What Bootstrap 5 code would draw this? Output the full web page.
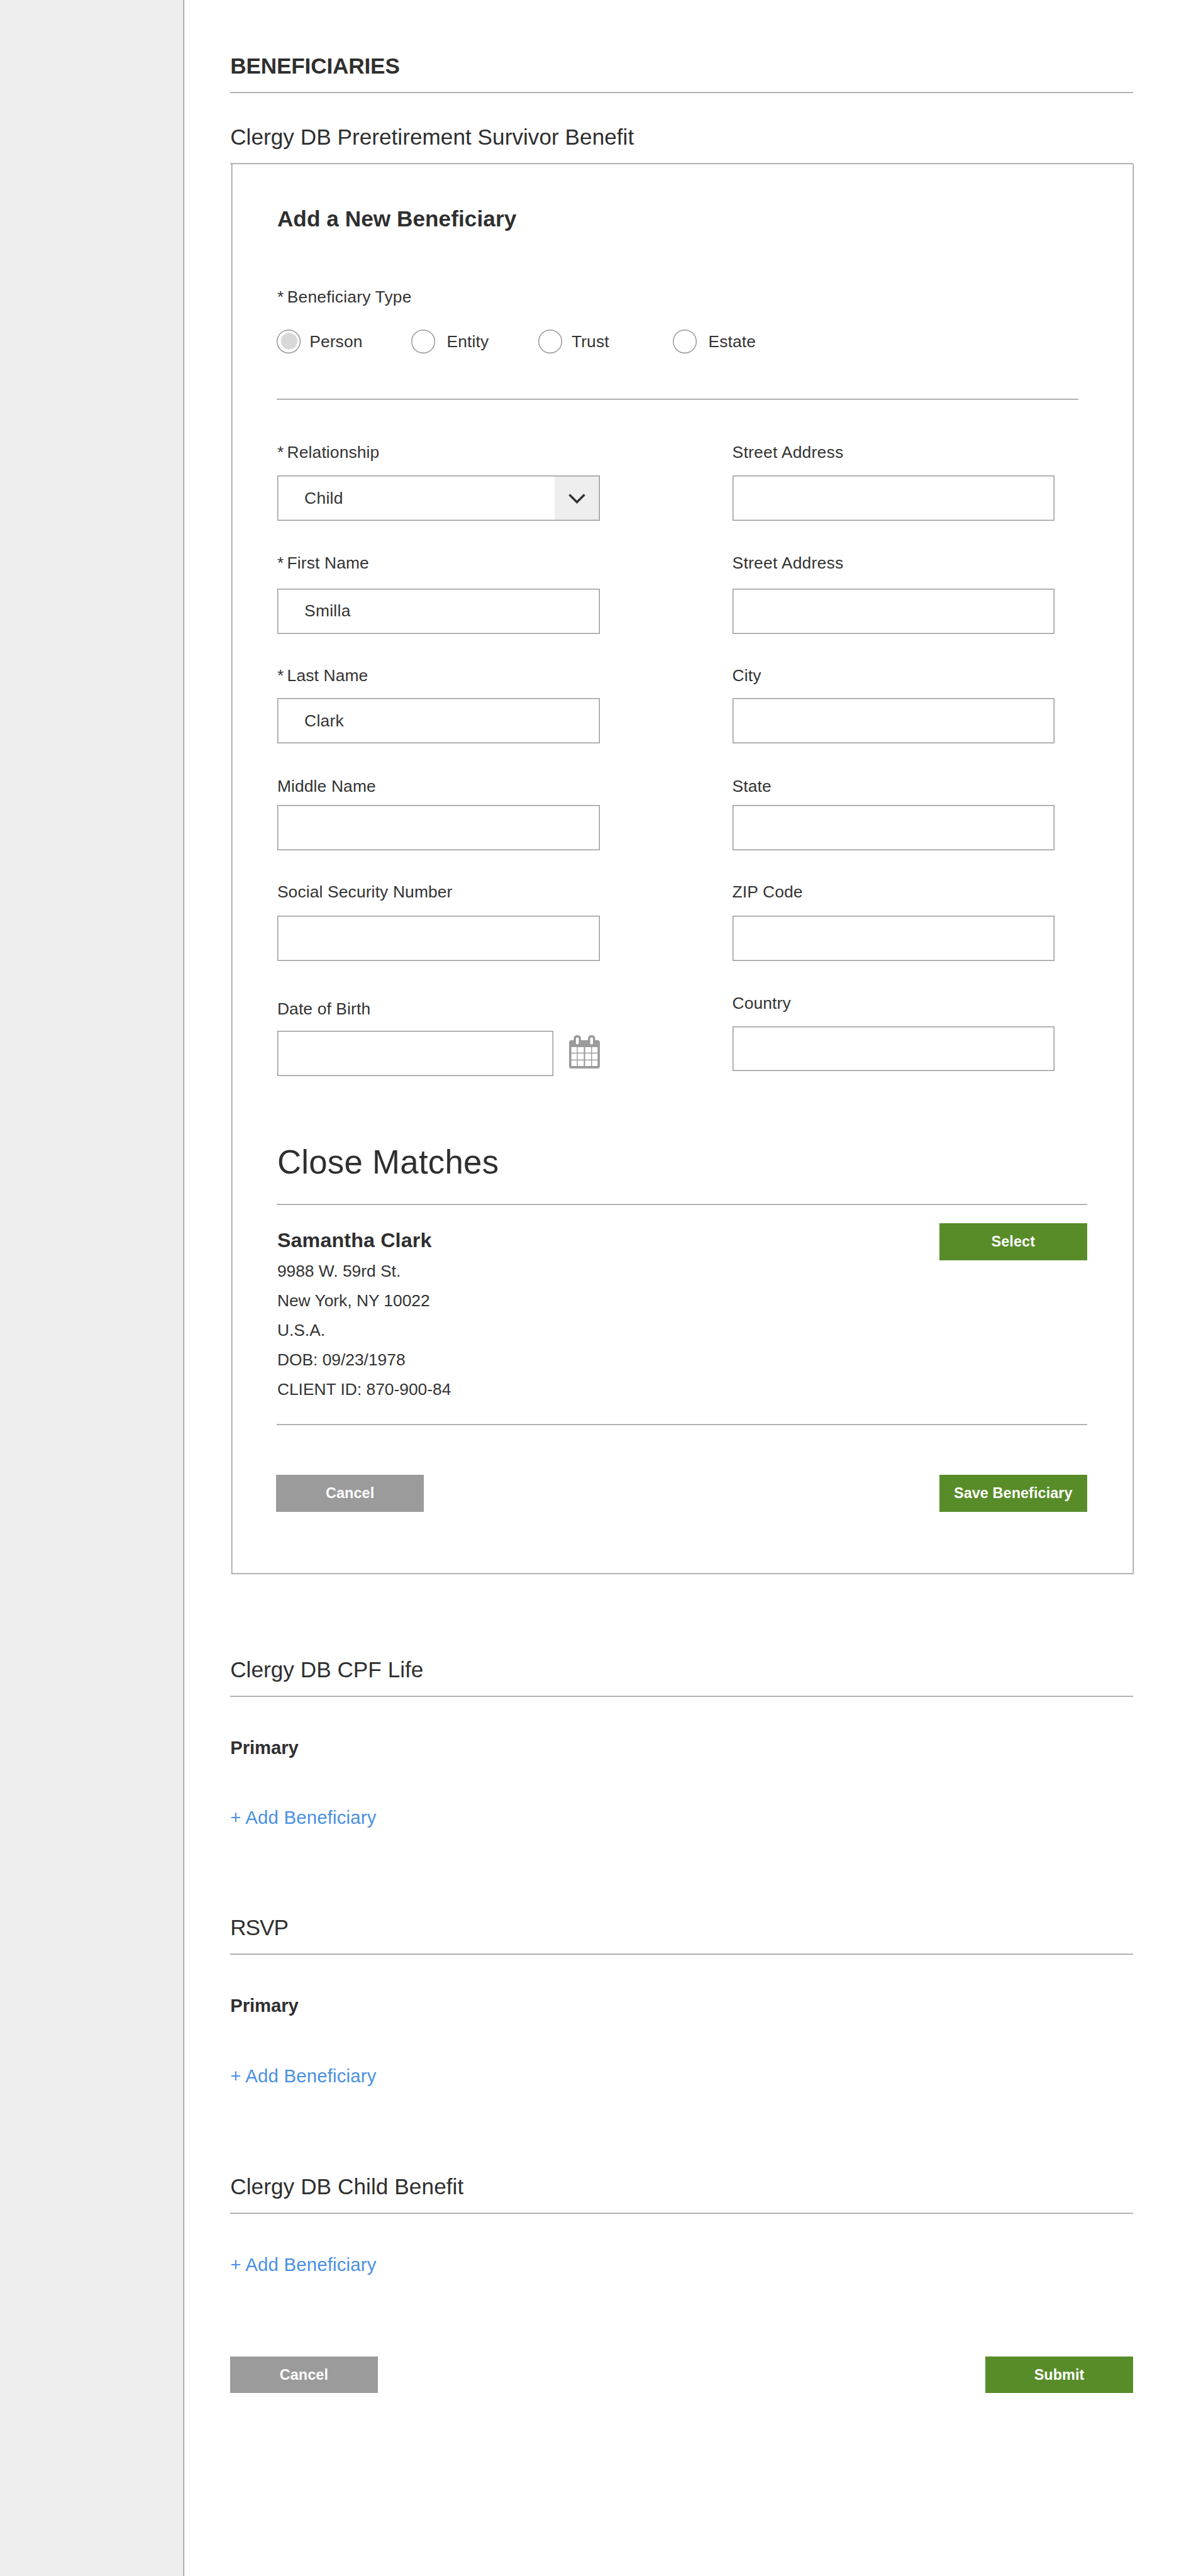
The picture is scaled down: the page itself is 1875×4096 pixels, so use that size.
<!DOCTYPE html>
<html lang="en">
<head>
<meta charset="utf-8">
<meta name="viewport" content="width=device-width, initial-scale=1">
<title>Beneficiaries</title>
<link href="https://cdn.jsdelivr.net/npm/bootstrap@5.3.0/dist/css/bootstrap.min.css" rel="stylesheet">
<style>
:root{--u:.732422px;--ink:#333;--line:#979797;--soft:rgba(151,151,151,.46)}
body{font-family:"Liberation Sans",Arial,sans-serif;color:var(--ink);font-size:calc(36*var(--u));background:#fff}
.page-shell{min-height:4096px}
.side-rail{width:calc(400*var(--u));background:#eee;border-right:1px solid var(--line);box-shadow:inset -1px 0 0 #c6c6c6}
.page-main{margin-left:calc(100*var(--u));width:calc(1960*var(--u));padding-top:calc(113.4*var(--u))}
.sec-head{font-size:calc(48*var(--u));line-height:calc(61*var(--u));height:calc(88.6*var(--u));border-bottom:1px solid var(--line);box-shadow:inset 0 -1px 0 var(--soft);margin:0;color:#2f2f2f;font-weight:400;letter-spacing:calc(.05*var(--u))}
.main-title{letter-spacing:calc(-.2*var(--u))}
.after-title{margin-top:calc(65.4*var(--u))}
.after-panel{margin-top:calc(176.7*var(--u))}
.next-sec{margin-top:calc(185*var(--u));letter-spacing:calc(-1.4*var(--u))}
.last-sec{margin-top:calc(186.3*var(--u));letter-spacing:calc(.12*var(--u))}
.panel-box{margin-left:calc(2*var(--u));width:calc(1960*var(--u));height:calc(3062*var(--u));border:1px solid var(--line);border-top:0;box-shadow:inset 1px 0 0 var(--soft),inset -1px -1px 0 var(--soft);padding:calc(89.4*var(--u)) calc(102*var(--u) - 1px) 0 calc(100*var(--u) - 1px)}
.panel-title{font-size:calc(48*var(--u));line-height:calc(60*var(--u));margin:0;color:#2f2f2f;letter-spacing:calc(.1*var(--u))}
.lbl{display:block;height:calc(40*var(--u));line-height:calc(42*var(--u));margin:0;letter-spacing:calc(.2*var(--u))}
.lbl-wide{letter-spacing:calc(.4*var(--u))}
.req{margin-right:calc(-3*var(--u))}
.type-lbl{margin-top:calc(118.1*var(--u));letter-spacing:calc(.3*var(--u))}
.type-row{margin-top:calc(51.5*var(--u));margin-left:calc(-1*var(--u));height:calc(52*var(--u));line-height:calc(53*var(--u));letter-spacing:calc(.2*var(--u))}
.opt-a{width:calc(292*var(--u));gap:calc(19*var(--u))}
.opt-b{width:calc(276*var(--u));gap:calc(25*var(--u))}
.opt-c{width:calc(292*var(--u));gap:calc(20*var(--u))}
.opt-d{gap:calc(25*var(--u))}
.dot{width:calc(52*var(--u));height:calc(52*var(--u));flex:none}
.type-rule{margin:calc(99*var(--u)) 0 0 calc(-1*var(--u));width:calc(1741*var(--u));border-top:1px solid var(--line);height:calc(2*var(--u));box-shadow:inset 0 1px 0 var(--soft)}
.field-cols{margin-top:calc(93.5*var(--u));gap:calc(288*var(--u));height:calc(1374.5*var(--u))}
.field-col{width:calc(700*var(--u))}
.f2{margin-top:calc(71.5*var(--u))}.f3{margin-top:calc(69.5*var(--u))}.f4{margin-top:calc(72*var(--u))}
.f5{margin-top:calc(69.5*var(--u))}.f6{margin-top:calc(83.5*var(--u))}.f6r{margin-top:calc(71.5*var(--u))}
.f1 .lbl,.f3 .lbl,.f6r .lbl{margin-bottom:calc(30.5*var(--u))}.f2 .lbl{margin-bottom:calc(36.5*var(--u))}
.f4 .lbl{margin-bottom:calc(22*var(--u))}.f5 .lbl{margin-bottom:calc(32.5*var(--u))}.f6 .lbl{margin-bottom:calc(28.5*var(--u))}
.entry,.pick{height:calc(98*var(--u));border:1px solid var(--line);box-shadow:inset 0 0 0 1px var(--soft);border-radius:0;font-size:calc(36*var(--u));line-height:calc(96*var(--u));letter-spacing:calc(.4*var(--u));color:var(--ink);padding:0 0 0 calc(59*var(--u) - 1px);background:#fff}
.pick-arrow{width:calc(97*var(--u));background:#eee;box-shadow:inset -1px 0 0 #c6c6c6,inset 0 1px 0 #c6c6c6,inset 0 -1px 0 #c6c6c6}
.entry-date{width:calc(600*var(--u))}
.cal{width:calc(67*var(--u));height:calc(73*var(--u));margin-left:calc(34*var(--u));margin-top:calc(-6*var(--u))}
.match-title{font-size:calc(72*var(--u));line-height:calc(90*var(--u));height:calc(138*var(--u));margin:calc(142*var(--u)) 0 0 calc(-1*var(--u));padding-left:calc(1*var(--u));border-bottom:1px solid var(--line);box-shadow:inset 0 -1px 0 var(--soft);color:#2f2f2f;font-weight:400;letter-spacing:calc(.4*var(--u))}
.match-row{height:calc(478*var(--u));margin-left:calc(-1*var(--u));padding:calc(40*var(--u)) 0 0 calc(1*var(--u));border-bottom:1px solid var(--line);box-shadow:inset 0 -1px 0 var(--soft)}
.match-name{font-size:calc(44*var(--u));line-height:calc(60*var(--u));margin:calc(7.5*var(--u)) 0 calc(4.7*var(--u));color:#2f2f2f;letter-spacing:calc(.2*var(--u))}
.match-line{line-height:calc(64*var(--u))}
.act{width:calc(320*var(--u));height:calc(80*var(--u));line-height:calc(78*var(--u));font-size:calc(32*var(--u));font-weight:700;border:0;border-radius:0;padding:0;color:#fff;letter-spacing:calc(.1*var(--u))}
.act-go{background:#588c29}.act-no{background:#9b9b9b}
.panel-acts{margin-top:calc(108*var(--u));margin-left:calc(-2*var(--u))}
.page-acts{margin-top:calc(175*var(--u))}
.tier{font-size:calc(40*var(--u));height:calc(50*var(--u));line-height:calc(52*var(--u));margin:calc(85*var(--u)) 0 0;color:#2f2f2f;letter-spacing:calc(-.1*var(--u))}
.add-link{display:block;font-size:calc(40*var(--u));height:calc(50*var(--u));line-height:calc(52*var(--u));margin-top:calc(102*var(--u));color:#4a90e2;text-decoration:none;letter-spacing:calc(.3*var(--u))}
.add-only{margin-top:calc(85*var(--u))}
</style>
</head>
<body>
<div class="page-shell d-flex">
<aside class="side-rail flex-shrink-0"></aside>
<main class="page-main flex-shrink-0">
  <h1 class="sec-head main-title fw-bold">BENEFICIARIES</h1>
  <section>
    <h2 class="sec-head after-title">Clergy DB Preretirement Survivor Benefit</h2>
    <form class="panel-box">
      <h3 class="panel-title fw-bold">Add a New Beneficiary</h3>
      <div class="lbl type-lbl"><span class="req">*</span> Beneficiary Type</div>
      <div class="type-row d-flex">
        <label class="opt-a d-flex"><svg class="dot" viewBox="0 0 52 52"><circle cx="26" cy="26" r="25" fill="#fff" stroke="#979797" stroke-width="2"/><circle cx="27" cy="25" r="18" fill="#d8d8d8"/></svg><span>Person</span></label>
        <label class="opt-b d-flex"><svg class="dot" viewBox="0 0 52 52"><circle cx="26" cy="26" r="25" fill="#fff" stroke="#979797" stroke-width="2"/></svg><span>Entity</span></label>
        <label class="opt-c d-flex"><svg class="dot" viewBox="0 0 52 52"><circle cx="26" cy="26" r="25" fill="#fff" stroke="#979797" stroke-width="2"/></svg><span>Trust</span></label>
        <label class="opt-d d-flex"><svg class="dot" viewBox="0 0 52 52"><circle cx="26" cy="26" r="25" fill="#fff" stroke="#979797" stroke-width="2"/></svg><span>Estate</span></label>
      </div>
      <div class="type-rule"></div>
      <div class="field-cols d-flex">
        <div class="field-col">
          <div class="f1"><label class="lbl"><span class="req">*</span> Relationship</label>
            <div class="pick d-flex justify-content-between"><span>Child</span><span class="pick-arrow d-flex"><svg width="100%" height="100%" viewBox="0 0 97 96"><path d="M32 40.500 L48.500 57 L65 40.500" fill="none" stroke="#333" stroke-width="5"/></svg></span></div></div>
          <div class="f2"><label class="lbl"><span class="req">*</span> First Name</label><input class="form-control entry" value="Smilla"></div>
          <div class="f3"><label class="lbl"><span class="req">*</span> Last Name</label><input class="form-control entry" value="Clark"></div>
          <div class="f4"><label class="lbl">Middle Name</label><input class="form-control entry"></div>
          <div class="f5"><label class="lbl">Social Security Number</label><input class="form-control entry"></div>
          <div class="f6"><label class="lbl">Date of Birth</label>
            <div class="d-flex align-items-center"><input class="form-control entry entry-date"><svg class="cal" viewBox="0 0 67 73"><path fill="#9b9b9b" fill-rule="evenodd" d="M5 11H10V8Q10 0 18 0Q26 0 26 8V11H41V8Q41 0 49 0Q57 0 57 8V11H62Q67 11 67 16V67Q67 72.500 62 72.500H5Q0 72.500 0 67V16Q0 11 5 11ZM15 7V18Q15 20 18 20Q21 20 21 18V7Q21 5 18 5Q15 5 15 7ZM46 7V18Q46 20 49 20Q52 20 52 18V7Q52 5 49 5Q46 5 46 7ZM5 26V38H17V26ZM19 26V38H32V26ZM35 26V38H48V26ZM50 26V38H62V26ZM5 40V53H17V40ZM19 40V53H32V40ZM35 40V53H48V40ZM50 40V53H62V40ZM5 55V67H17V55ZM19 55V67H32V55ZM35 55V67H48V55ZM50 55V67H62V55Z"/></svg></div></div>
        </div>
        <div class="field-col">
          <div class="f1"><label class="lbl lbl-wide">Street Address</label><input class="form-control entry"></div>
          <div class="f2"><label class="lbl lbl-wide">Street Address</label><input class="form-control entry"></div>
          <div class="f3"><label class="lbl">City</label><input class="form-control entry"></div>
          <div class="f4"><label class="lbl">State</label><input class="form-control entry"></div>
          <div class="f5"><label class="lbl">ZIP Code</label><input class="form-control entry"></div>
          <div class="f6r"><label class="lbl">Country</label><input class="form-control entry"></div>
        </div>
      </div>
      <h3 class="match-title">Close Matches</h3>
      <div class="match-row d-flex justify-content-between align-items-start">
        <div>
          <div class="match-name fw-bold">Samantha Clark</div>
          <div class="match-line">9988 W. 59rd St.</div>
          <div class="match-line">New York, NY 10022</div>
          <div class="match-line">U.S.A.</div>
          <div class="match-line">DOB: 09/23/1978</div>
          <div class="match-line">CLIENT ID: 870-900-84</div>
        </div>
        <button type="button" class="btn act act-go">Select</button>
      </div>
      <div class="panel-acts d-flex justify-content-between">
        <button type="button" class="btn act act-no">Cancel</button>
        <button type="button" class="btn act act-go">Save Beneficiary</button>
      </div>
    </form>
  </section>
  <section>
    <h2 class="sec-head after-panel">Clergy DB CPF Life</h2>
    <div class="tier fw-bold">Primary</div>
    <a class="add-link" href="#">+ Add Beneficiary</a>
  </section>
  <section>
    <h2 class="sec-head next-sec">RSVP</h2>
    <div class="tier fw-bold">Primary</div>
    <a class="add-link" href="#">+ Add Beneficiary</a>
  </section>
  <section>
    <h2 class="sec-head last-sec">Clergy DB Child Benefit</h2>
    <a class="add-link add-only" href="#">+ Add Beneficiary</a>
  </section>
  <div class="page-acts d-flex justify-content-between">
    <button type="button" class="btn act act-no">Cancel</button>
    <button type="button" class="btn act act-go">Submit</button>
  </div>
</main>
</div>
<script src="https://cdn.jsdelivr.net/npm/bootstrap@5.3.0/dist/js/bootstrap.bundle.min.js"></script>
</body>
</html>
